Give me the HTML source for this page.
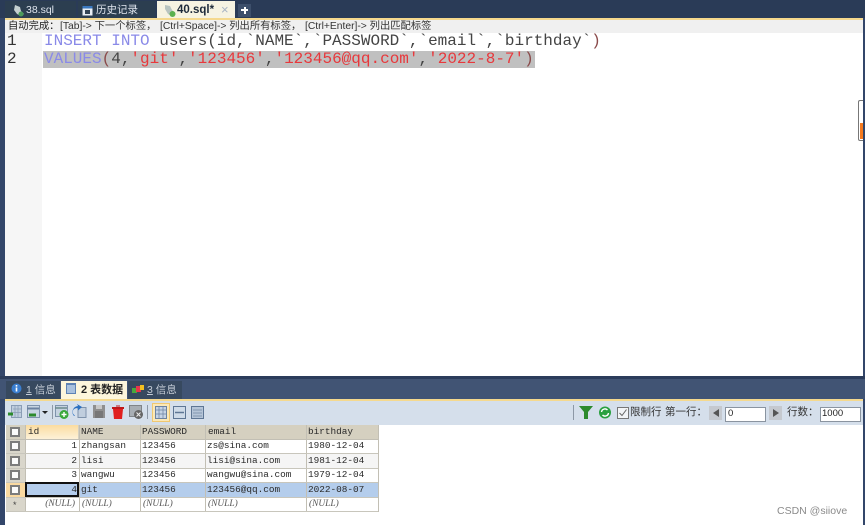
<!DOCTYPE html>
<html><head><meta charset="utf-8">
<style>
html,body{margin:0;padding:0;background:#fff}
#p{position:relative;width:865px;height:525px;overflow:hidden;background:#fff;font-family:"Liberation Sans","Noto Sans CJK SC",sans-serif}
#p div,#p span.a,#p svg{position:absolute}
.t{white-space:pre}
.code{font:16px/17px "Liberation Mono",monospace;white-space:pre;color:#444}
.k{color:#8a8ae8}.s{color:#e8383c}.p{color:#8a4a4a}
.tab{color:#dfe5ee;font-size:10px;line-height:14px;white-space:pre}
.c{font:9.4px/14px "Liberation Mono",monospace;white-space:pre;color:#2a2a2a}
.n{font:italic 9.4px/14px "Liberation Serif",serif;color:#555;white-space:pre}
.cb{width:6px;height:6px;background:#fbfbfb;border:2px solid #7c7c7c}
.h{font-size:10.300px;line-height:14px;color:#333;white-space:pre}
</style></head><body><div id="p">
<!-- top bar -->
<div style="left:0;top:0;width:865px;height:18px;background:#2a3b57"></div>
<div style="left:5px;top:1px;width:71px;height:17px;background:#2c3e50"></div>
<div style="left:78px;top:1px;width:77px;height:17px;background:#2c3e50"></div>
<div style="left:157px;top:1px;width:78px;height:18px;background:#f6f3e2"></div>
<div style="left:0;top:18px;width:865px;height:2px;background:#f5d98e"></div>
<svg style="left:12px;top:3px" width="14" height="14" viewBox="0 0 14 14"><path d="M3 2l5 2 1 4 3 3-3 2-4-2-3-4z" fill="#c4cfcf"/><circle cx="9" cy="11" r="2.500" fill="#4a9a5a"/></svg>
<div class="tab" style="left:26px;top:3px;font-size:10.500px">38.sql</div>
<svg style="left:82px;top:4px" width="11" height="12" viewBox="0 0 11 12"><rect x="0.500" y="2" width="10" height="9.500" fill="#e8eef5"/><rect x="0.500" y="2" width="10" height="2.500" fill="#3a78c0"/><rect x="3" y="6" width="5" height="4" fill="#345"/></svg>
<div class="tab" style="left:96px;top:3px;font-size:10.500px">历史记录</div>
<svg style="left:163px;top:3px" width="14" height="15" viewBox="0 0 14 15"><path d="M2 2l5 1 2 4 3 3-3 3-4-2-3-5z" fill="#b8c4c0"/><circle cx="9.500" cy="11" r="3" fill="#5ab050"/></svg>
<div class="tab" style="left:177px;top:3px;color:#1d2a3a;font-weight:bold;font-size:11.500px">40.sql*</div>
<div class="t" style="left:221px;top:3px;font-size:13px;line-height:14px;color:#a8b4c4">×</div>
<div style="left:238px;top:4px;width:13px;height:13px;background:#3d4f6b"></div>
<div style="left:241px;top:9px;width:7px;height:2px;background:#fff"></div>
<div style="left:243.500px;top:6.500px;width:2px;height:7px;background:#fff"></div>
<!-- hint -->
<div style="left:4px;top:20px;width:859px;height:13px;background:#f0f0f0"></div>
<div class="h" style="left:8px;top:20px;color:#222">自动完成：</div>
<div class="h" style="left:60px;top:20px">[Tab]-&gt; 下一个标签，</div>
<div class="h" style="left:160px;top:20px">[Ctrl+Space]-&gt; 列出所有标签，</div>
<div class="h" style="left:305px;top:20px">[Ctrl+Enter]-&gt; 列出匹配标签</div>
<!-- editor -->
<div style="left:5px;top:33px;width:37px;height:343px;background:#f6f6f6"></div>
<div style="left:43px;top:51px;width:492px;height:17px;background:#c0c0c0"></div>
<div class="code" style="left:7px;top:33px;color:#333">1</div>
<div class="code" style="left:7px;top:51px;color:#333">2</div>
<div class="code" style="left:44px;top:33px"><span class="k">INSERT INTO</span> users(id,`NAME`,`PASSWORD`,`email`,`birthday`<span class="p">)</span></div>
<div class="code" style="left:44px;top:51px"><span class="k">VALUES</span><span class="p">(</span>4,<span class="s">'git'</span>,<span class="s">'123456'</span>,<span class="s">'123456@qq.com'</span>,<span class="s">'2022-8-7'</span><span class="p">)</span></div>
<!-- scroll mark -->
<div style="left:858px;top:100px;width:4px;height:39px;background:#fff;border:1px solid #777;border-right:0;border-radius:2px 0 0 2px"></div>
<div style="left:860px;top:123px;width:3px;height:16px;background:#f57a1f"></div>
<!-- frame edges -->
<div style="left:0;top:18px;width:5px;height:507px;background:#33466a"></div>
<div style="left:863px;top:18px;width:2px;height:507px;background:#33466a"></div>
<!-- bottom tab bar -->
<div style="left:0;top:376px;width:865px;height:3px;background:#2b3c5b"></div>
<div style="left:0;top:379px;width:865px;height:20px;background:#415474"></div>
<div style="left:6px;top:381px;width:54px;height:18px;background:#37495f"></div>
<div style="left:61px;top:381px;width:66px;height:19px;background:#fdf6dc"></div>
<div style="left:128px;top:381px;width:54px;height:18px;background:#37495f"></div>
<svg style="left:11px;top:383px" width="11" height="11" viewBox="0 0 11 11"><circle cx="5.500" cy="5.500" r="5" fill="#3a7ed0"/><rect x="4.700" y="2" width="1.600" height="1.600" fill="#fff"/><rect x="4.700" y="4.500" width="1.600" height="4" fill="#fff"/></svg>
<div class="t" style="left:26px;top:383px;font-size:10.500px;line-height:14px;color:#c4ccd6"><u>1</u> 信息</div>
<svg style="left:66px;top:383px" width="10" height="12" viewBox="0 0 10 12"><rect width="10" height="11" fill="#5e82b4"/><rect x="1" y="2" width="8" height="8" fill="#a9c1de"/></svg>
<div class="t" style="left:81px;top:383px;font-size:11px;line-height:14px;font-weight:bold;color:#222">2 表数据</div>
<svg style="left:132px;top:385px" width="12" height="9" viewBox="0 0 12 9"><rect x="0" y="3" width="5" height="5" fill="#4aa83c"/><rect x="4" y="1" width="5" height="6" fill="#e8364a"/><rect x="8" y="0" width="4" height="5" fill="#f4c020"/></svg>
<div class="t" style="left:147px;top:383px;font-size:10.500px;line-height:14px;color:#c4ccd6"><u>3</u> 信息</div>
<!-- toolbar -->
<div style="left:5px;top:399px;width:858px;height:2px;background:#f5d98e"></div>
<div style="left:5px;top:401px;width:858px;height:24px;background:#d5dfeb"></div>
<svg style="left:6px;top:403px" width="205" height="20" viewBox="0 0 205 20" fill="none">
<rect x="5.500" y="2.500" width="10" height="12" fill="#c0cede" stroke="#8a9db5"/><path d="M7 6h8M7 9.500h8M9 3v11M12 3v11" stroke="#8a9db5" stroke-width=".7"/><path d="M2 11h5" stroke="#2c8a2c" stroke-width="3"/>
<rect x="21.500" y="2.500" width="12" height="12" fill="#c8d5e2" stroke="#7f93ac"/><path d="M21 5.500h12" stroke="#6d82a0" stroke-width="2"/><path d="M23 12h7" stroke="#2c8a2c" stroke-width="3"/>
<path d="M36 8h6l-3 3z" fill="#222"/>
<path d="M46.500 2v14" stroke="#8d98a6"/>
<rect x="49.500" y="2.500" width="12" height="11" fill="#c5d2e0" stroke="#7f93ac"/><path d="M49 5h12" stroke="#6a8a8a" stroke-width="1.500"/><circle cx="58" cy="11.500" r="4.500" fill="#3ba83b"/><path d="M55.500 11.500h5M58 9v5" stroke="#fff" stroke-width="1.400"/>
<path d="M72 4.500h8v10h-8z" fill="#c0cede" stroke="#7f93ac"/><path d="M68 13a6 6 0 0 1 4-10l-1-2 5 3-4 3.500v-2a3.500 3.500 0 0 0-3 7z" fill="#2a6fc0"/>
<rect x="87" y="2" width="12" height="13" fill="#8f8f8f"/><rect x="90" y="2" width="6" height="4" fill="#c8c8c8"/><rect x="89" y="8" width="8" height="7" fill="#777"/>
<path d="M107 6h10l-1 10h-8z" fill="#e02020"/><path d="M106 5h12" stroke="#c01818" stroke-width="2"/><path d="M110 3h4" stroke="#c01818"/>
<rect x="123.500" y="2.500" width="12" height="11" fill="#a8aeb4" stroke="#808488"/><circle cx="132.500" cy="11.500" r="4.500" fill="#666"/><path d="M130.500 9.500l4 4M134.500 9.500l-4 4" stroke="#eee"/>
<path d="M141.500 2v14" stroke="#8d98a6"/>
<rect x="146.500" y="0.500" width="17" height="18" fill="#fbe8b8" stroke="#f0c870"/><rect x="149.500" y="3.500" width="11" height="12" fill="#c6d4e6" stroke="#6d82a0"/><path d="M149 7h12M149 11h12M153 3v12M157 3v12" stroke="#6d82a0" stroke-width=".7"/>
<rect x="167.500" y="3.500" width="12" height="12" fill="#cfdbe8" stroke="#5e7694"/><path d="M169 9.500h9" stroke="#5e7694" stroke-width="1.500"/>
<rect x="185.500" y="3.500" width="12" height="12" fill="#b5c5d8" stroke="#5e7694"/><path d="M187 7h9M187 10h9M187 13h9" stroke="#8398b0"/>
</svg>
<!-- right controls -->
<div style="left:573px;top:405px;width:1px;height:15px;background:#8d98a6"></div>
<svg style="left:579px;top:406px" width="14" height="13" viewBox="0 0 14 13"><path d="M0 0h14l-5 6v7h-4v-7z" fill="#2d8a2d"/></svg>
<svg style="left:598px;top:406px" width="14" height="13" viewBox="0 0 14 13"><circle cx="7" cy="6.500" r="6" fill="#2aa040"/><path d="M3.500 6a3.500 3.500 0 0 1 6-2M10.500 7a3.500 3.500 0 0 1-6 2" stroke="#fff" stroke-width="1.400" fill="none"/></svg>
<div style="left:617px;top:407px;width:10px;height:10px;background:#f2f4f6;border:1px solid #777"></div>
<svg style="left:618px;top:408px" width="10" height="10" viewBox="0 0 10 10"><path d="M1.500 5l2.500 2.500 4.500-6" stroke="#666" fill="none"/></svg>
<div class="t" style="left:630px;top:405px;font-size:10.500px;line-height:15px;color:#333">限制行</div>
<div class="t" style="left:665px;top:405px;font-size:10.500px;line-height:15px;color:#333">第一行：</div>
<div style="left:709px;top:406px;width:13px;height:14px;background:#c5c9cf"></div>
<svg style="left:713px;top:409px" width="6" height="8" viewBox="0 0 6 8"><path d="M6 0v8L0 4z" fill="#555"/></svg>
<div style="left:725px;top:407px;width:39px;height:13px;background:#fff;border:1px solid #8a94a0"></div>
<div class="t" style="left:728px;top:407px;font-size:9.500px;line-height:14px;color:#222">0</div>
<div style="left:769px;top:406px;width:13px;height:14px;background:#c5c9cf"></div>
<svg style="left:773px;top:409px" width="6" height="8" viewBox="0 0 6 8"><path d="M0 0v8l6-4z" fill="#555"/></svg>
<div class="t" style="left:787px;top:405px;font-size:10.500px;line-height:15px;color:#333">行数：</div>
<div style="left:820px;top:407px;width:39px;height:13px;background:#fff;border:1px solid #8a94a0"></div>
<div class="t" style="left:822px;top:407px;font-size:9.500px;line-height:14px;color:#222">1000</div>
<!-- table -->
<div style="left:6px;top:425px;width:372px;height:14px;background:#d5d0c0"></div>
<div style="left:26px;top:425px;width:52px;height:14px;background:linear-gradient(#fbdca0,#fdf1d8)"></div>
<div style="left:6px;top:439px;width:19px;height:72px;background:#d9d6cb"></div>
<div style="left:6px;top:483px;width:19px;height:14px;background:#fad9a0"></div>
<div style="left:25px;top:454px;width:353px;height:14px;background:#f5f5f5"></div>
<div style="left:25px;top:483px;width:353px;height:14px;background:#b4cdec"></div>
<!-- grid lines -->
<div style="left:25px;top:425px;width:1px;height:87px;background:#c2bfb4"></div>
<div style="left:79px;top:425px;width:1px;height:87px;background:#c2bfb4"></div>
<div style="left:140px;top:425px;width:1px;height:87px;background:#c2bfb4"></div>
<div style="left:205px;top:425px;width:1px;height:87px;background:#c2bfb4"></div>
<div style="left:306px;top:425px;width:1px;height:87px;background:#c2bfb4"></div>
<div style="left:378px;top:425px;width:1px;height:87px;background:#c2bfb4"></div>
<div style="left:6px;top:439px;width:372px;height:1px;background:#c2bfb4"></div>
<div style="left:6px;top:453px;width:372px;height:1px;background:#c8c6bc"></div>
<div style="left:6px;top:468px;width:372px;height:1px;background:#c8c6bc"></div>
<div style="left:6px;top:482px;width:372px;height:1px;background:#c8c6bc"></div>
<div style="left:6px;top:497px;width:372px;height:1px;background:#c8c6bc"></div>
<div style="left:6px;top:511px;width:372px;height:1px;background:#c8c6bc"></div>
<div style="left:25px;top:482px;width:50px;height:11px;border:2px solid #111"></div>
<!-- checkboxes -->
<div class="cb" style="left:10px;top:427px"></div>
<div class="cb" style="left:10px;top:441px"></div>
<div class="cb" style="left:10px;top:456px"></div>
<div class="cb" style="left:10px;top:470px"></div>
<div class="cb" style="left:10px;top:485px"></div>
<div class="t" style="left:13px;top:499px;font-size:9px;line-height:12px;color:#444">*</div>
<!-- header -->
<div class="c" style="left:28px;top:425px">id</div>
<div class="c" style="left:81px;top:425px">NAME</div>
<div class="c" style="left:142px;top:425px">PASSWORD</div>
<div class="c" style="left:208px;top:425px">email</div>
<div class="c" style="left:308px;top:425px">birthday</div>
<!-- rows -->
<div class="c" style="left:25px;top:439px;width:52px;text-align:right">1</div>
<div class="c" style="left:81px;top:439px">zhangsan</div>
<div class="c" style="left:142px;top:439px">123456</div>
<div class="c" style="left:207px;top:439px">zs@sina.com</div>
<div class="c" style="left:308px;top:439px">1980-12-04</div>
<div class="c" style="left:25px;top:454px;width:52px;text-align:right">2</div>
<div class="c" style="left:81px;top:454px">lisi</div>
<div class="c" style="left:142px;top:454px">123456</div>
<div class="c" style="left:207px;top:454px">lisi@sina.com</div>
<div class="c" style="left:308px;top:454px">1981-12-04</div>
<div class="c" style="left:25px;top:468px;width:52px;text-align:right">3</div>
<div class="c" style="left:81px;top:468px">wangwu</div>
<div class="c" style="left:142px;top:468px">123456</div>
<div class="c" style="left:207px;top:468px">wangwu@sina.com</div>
<div class="c" style="left:308px;top:468px">1979-12-04</div>
<div class="c" style="left:25px;top:483px;width:52px;text-align:right">4</div>
<div class="c" style="left:81px;top:483px">git</div>
<div class="c" style="left:142px;top:483px">123456</div>
<div class="c" style="left:207px;top:483px">123456@qq.com</div>
<div class="c" style="left:308px;top:483px">2022-08-07</div>
<div class="n" style="left:25px;top:497px;width:50px;text-align:right">(NULL)</div>
<div class="n" style="left:82px;top:497px">(NULL)</div>
<div class="n" style="left:143px;top:497px">(NULL)</div>
<div class="n" style="left:208px;top:497px">(NULL)</div>
<div class="n" style="left:309px;top:497px">(NULL)</div>
<!-- watermark -->
<div class="t" style="left:777px;top:504px;font-size:10.500px;line-height:14px;color:#8a8a8a">CSDN @siiove</div>
</div></body></html>
